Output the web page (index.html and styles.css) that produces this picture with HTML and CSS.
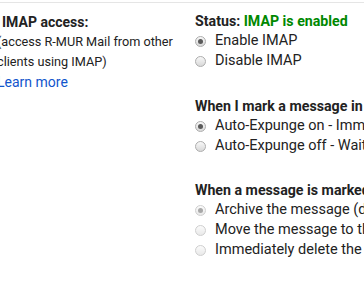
FILE: index.html
```html
<!DOCTYPE html>
<html>
<head>
<meta charset="utf-8">
<link rel="stylesheet" href="styles.css">
</head>
<body>
<div class="settings">
  <div class="row">
    <div class="label-col">
      <div class="label-title">IMAP access:</div>
      <div class="label-desc">(access R-MUR Mail from other clients using IMAP)</div>
      <a class="link" href="#">Learn more</a>
    </div>
    <div class="opts-col">
      <div class="group">
        <div class="heading">Status: <span class="ok">IMAP is enabled</span></div>
        <label class="opt"><span class="radio checked"></span>Enable IMAP</label>
        <label class="opt"><span class="radio"></span>Disable IMAP</label>
      </div>
      <div class="group group-2">
        <div class="heading">When I mark a message in IMAP as deleted:</div>
        <label class="opt"><span class="radio checked"></span>Auto-Expunge on - Immediately update the server.</label>
        <label class="opt"><span class="radio"></span>Auto-Expunge off - Wait for the client to update the server.</label>
      </div>
      <div class="group group-3">
        <div class="heading">When a message is marked as deleted and expunged from the last visible IMAP folder:</div>
        <label class="opt disabled"><span class="radio checked"></span>Archive the message (default)</label>
        <label class="opt disabled"><span class="radio"></span>Move the message to the Trash</label>
        <label class="opt disabled"><span class="radio"></span>Immediately delete the message forever</label>
      </div>
    </div>
  </div>
</div>
</body>
</html>
```
FILE: styles.css
```css
html, body {
  margin: 0;
  padding: 0;
  background: #fff;
}
body {
  width: 364px;
  height: 286px;
  overflow: hidden;
  font-family: Roboto, "Liberation Sans", Arial, sans-serif;
  color: #222;
}
.settings {
  margin-top: 2px;
  border-top: 1px solid #e5e5e5;
}
.row {
  display: flex;
}
.label-col {
  flex: none;
  width: 198px;
  margin-left: -3px;
  padding-top: 9px;
}
.label-title {
  padding-left: 5px;
  font-size: 14px;
  font-weight: bold;
  line-height: 20px;
  color: #222;
}
.label-desc {
  width: 185px;
  font-size: 12.7px;
  line-height: 20px;
  color: #222;
}
.link {
  display: block;
  font-size: 14px;
  line-height: 20px;
  color: #15c;
  text-decoration: none;
}
.opts-col {
  flex: none;
  width: 600px;
  padding-top: 8px;
}
.group-2 {
  margin-top: 25px;
}
.group-3 {
  margin-top: 24px;
}
.heading {
  font-size: 14.2px;
  font-weight: bold;
  line-height: 20px;
  white-space: nowrap;
  color: #222;
}
.ok {
  color: #080;
}
.opt {
  display: flex;
  align-items: flex-start;
  font-size: 14.5px;
  line-height: 20px;
  white-space: nowrap;
  color: #222;
}
.radio {
  flex: none;
  box-sizing: border-box;
  width: 11px;
  height: 11px;
  margin: 5px 9px 0 0;
  border-radius: 50%;
  border: 1px solid #adadad;
  background: linear-gradient(#f8f8f8, #d8d8d8);
  position: relative;
}
.radio.checked::after {
  content: "";
  position: absolute;
  left: 2px;
  top: 2px;
  width: 5px;
  height: 5px;
  border-radius: 50%;
  background: #5a5a5a;
}
.disabled .radio {
  border-color: #cfcfcf;
  background: linear-gradient(#fbfbfb, #e9e9e9);
}
.disabled .radio.checked::after {
  background: #a8a8a8;
}
```
